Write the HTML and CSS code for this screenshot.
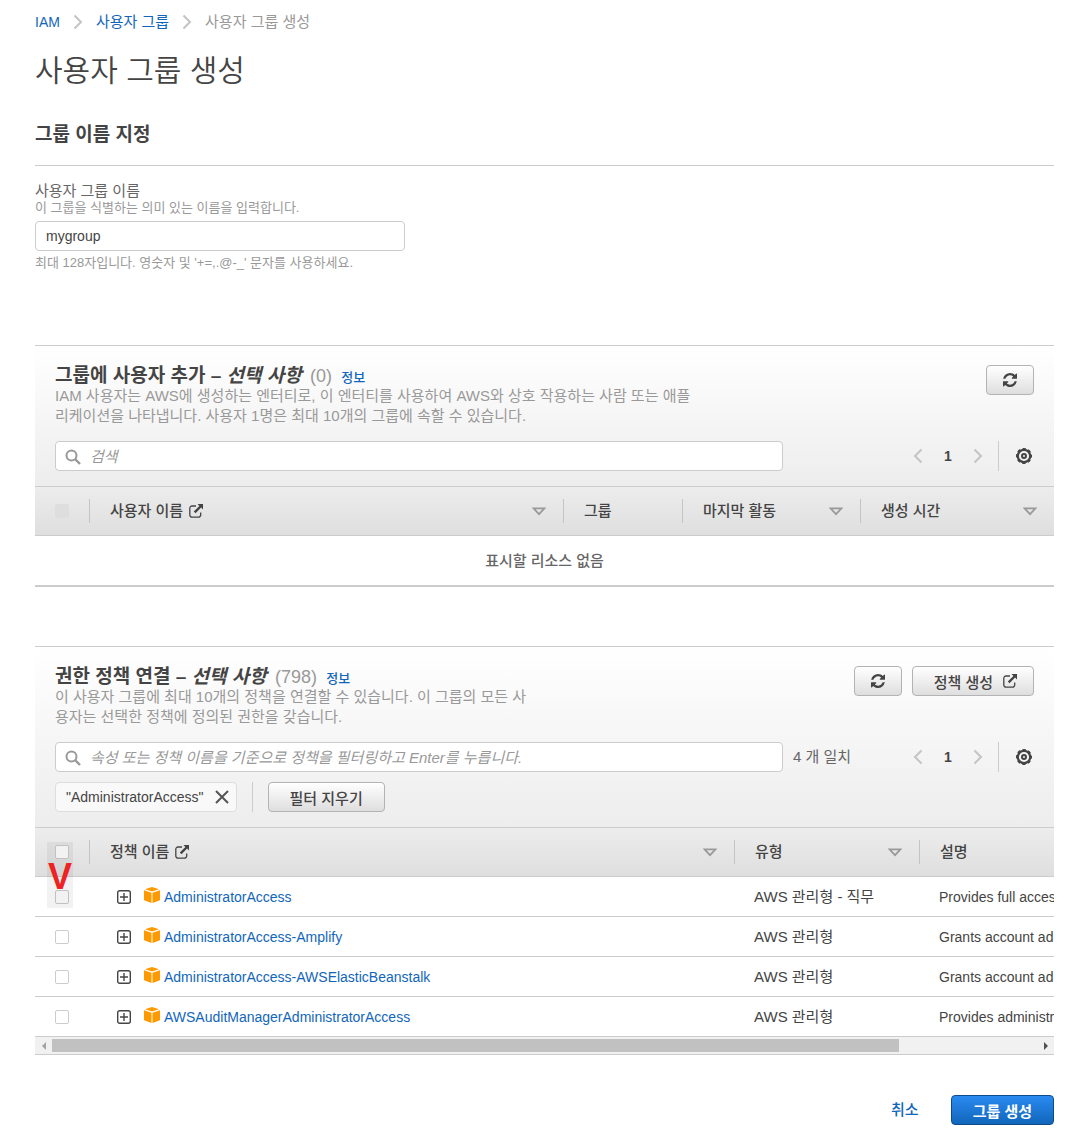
FILE: index.html
```html
<!DOCTYPE html>
<html lang="ko">
<head>
<meta charset="utf-8">
<title>사용자 그룹 생성</title>
<link rel="stylesheet" href="styles.css">
</head>
<body>
<svg class="defs" aria-hidden="true">
  <symbol id="chevron" viewBox="0 0 10 16"><path d="M1.500 1.500 8 8l-6.500 6.500" fill="none" stroke="currentColor" stroke-width="2"/></symbol>
  <symbol id="search" viewBox="0 0 16 16"><circle cx="6.500" cy="6.500" r="5" fill="none" stroke="currentColor" stroke-width="2"/><path d="m10 10 5 5" stroke="currentColor" stroke-width="2.400"/></symbol>
  <symbol id="refresh" viewBox="0 0 1536 1536"><path fill="currentColor" d="M1511 928q0 5-1 7-64 268-268 434.500T764 1536q-146 0-282.500-55T238 1324l-129 129q-19 19-45 19t-45-19-19-45V960q0-26 19-45t45-19h448q26 0 45 19t19 45-19 45l-137 137q71 66 161 102t187 36q134 0 250-65t186-179q11-17 53-117 8-23 30-23h192q13 0 22.500 9.500t9.500 22.500zm25-800v448q0 26-19 45t-45 19h-448q-26 0-45-19t-19-45 19-45l138-138Q969 256 768 256q-134 0-250 65T332 500q-11 17-53 117-8 23-30 23H50q-13 0-22.500-9.500T18 608v-7q65-268 270-434.500T768 0q146 0 284 55.500T1297 212l130-129q19-19 45-19t45 19 19 45z"/></symbol>
  <symbol id="external" viewBox="0 0 14 14"><path d="M7 2H3a2.200 2.200 0 0 0-2.200 2.200V11A2.200 2.200 0 0 0 3 13.200h6.500A2.200 2.200 0 0 0 11.700 11V8.500" fill="none" stroke="currentColor" stroke-width="1.300"/><path d="M8.500 0H14v5.500l-1.900-1.900L6.500 9.200 4.800 7.500l5.600-5.600z" fill="currentColor"/></symbol>
  <symbol id="sort" viewBox="0 0 14 9"><path d="M1.600 1.400h10.800L7 7.200z" fill="none" stroke="currentColor" stroke-width="1.700"/></symbol>
  <symbol id="gear" viewBox="0 0 18 18"><circle cx="9" cy="9" r="6.200" fill="none" stroke="currentColor" stroke-width="2.200"/><circle cx="9" cy="9" r="7.300" fill="none" stroke="currentColor" stroke-width="1.500" stroke-dasharray="3.330 2.404" stroke-dashoffset="1.660"/><circle cx="9" cy="9" r="2" fill="none" stroke="currentColor" stroke-width="2"/></symbol>
  <symbol id="close" viewBox="0 0 14 14"><path d="m1 1 12 12M13 1 1 13" stroke="currentColor" stroke-width="2"/></symbol>
  <symbol id="plus" viewBox="0 0 14 14"><rect x=".7" y=".7" width="12.600" height="12.600" rx="2" fill="none" stroke="currentColor" stroke-width="1.400"/><path d="M3 7h8M7 3v8" stroke="currentColor" stroke-width="1.400"/></symbol>
  <symbol id="cube" viewBox="0 0 16 16"><path fill="#f90" d="M8 0l7 2.300L8 4.600 1 2.300zM0 3.300l7.500 2.500V16L0 13.200zM16 3.300 8.500 5.800V16l7.500-2.800z"/></symbol>
</svg>

<main class="page">
  <nav class="crumbs" aria-label="경로">
    <a href="#">IAM</a>
    <svg class="i-chevron"><use href="#chevron"/></svg>
    <a href="#">사용자 그룹</a>
    <svg class="i-chevron"><use href="#chevron"/></svg>
    <span>사용자 그룹 생성</span>
  </nav>

  <h1>사용자 그룹 생성</h1>

  <section>
    <h2 class="section-title">그룹 이름 지정</h2>
    <div class="field">
      <label for="group-name">사용자 그룹 이름</label>
      <p class="hint">이 그룹을 식별하는 의미 있는 이름을 입력합니다.</p>
      <input class="textbox name-box" id="group-name" type="text" value="mygroup">
      <p class="constraint">최대 128자입니다. 영숫자 및 '+=,.@-_' 문자를 사용하세요.</p>
    </div>
  </section>

  <section class="panel">
    <div class="panel-head">
      <div class="title-row">
        <div>
          <h2>그룹에 사용자 추가 – <em>선택 사항</em> <span class="count">(0)</span> <a class="info" href="#">정보</a></h2>
          <p class="desc">IAM 사용자는 AWS에 생성하는 엔터티로, 이 엔터티를 사용하여 AWS와 상호 작용하는 사람 또는 애플<br>리케이션을 나타냅니다. 사용자 1명은 최대 10개의 그룹에 속할 수 있습니다.</p>
        </div>
        <div class="actions">
          <button class="btn icon-btn" type="button" aria-label="새로 고침"><svg class="i-refresh"><use href="#refresh"/></svg></button>
        </div>
      </div>
      <div class="toolbar">
        <label class="search"><svg class="i-search"><use href="#search"/></svg><input class="textbox" type="text" placeholder="검색" aria-label="검색"></label>
        <span class="matches"></span>
        <div class="pager">
          <button type="button" aria-label="이전"><svg class="i-chevron back"><use href="#chevron"/></svg></button>
          <span class="page-no">1</span>
          <button type="button" aria-label="다음"><svg class="i-chevron"><use href="#chevron"/></svg></button>
        </div>
        <button class="settings" type="button" aria-label="설정"><svg class="i-gear"><use href="#gear"/></svg></button>
      </div>
    </div>
    <table class="grid users">
      <colgroup><col class="c-check"><col><col class="c-group"><col class="c-activity"><col class="c-created"></colgroup>
      <thead>
        <tr>
          <th><div class="col pick"><input type="checkbox" disabled aria-label="모두 선택"></div></th>
          <th><div class="col">사용자 이름<svg class="i-ext"><use href="#external"/></svg><svg class="i-sort"><use href="#sort"/></svg></div></th>
          <th><div class="col">그룹</div></th>
          <th><div class="col">마지막 활동<svg class="i-sort"><use href="#sort"/></svg></div></th>
          <th><div class="col">생성 시간<svg class="i-sort"><use href="#sort"/></svg></div></th>
        </tr>
      </thead>
      <tbody><tr><td class="empty" colspan="5">표시할 리소스 없음</td></tr></tbody>
    </table>
  </section>

  <section class="panel">
    <div class="panel-head">
      <div class="title-row">
        <div>
          <h2>권한 정책 연결 – <em>선택 사항</em> <span class="count">(798)</span> <a class="info" href="#">정보</a></h2>
          <p class="desc">이 사용자 그룹에 최대 10개의 정책을 연결할 수 있습니다. 이 그룹의 모든 사<br>용자는 선택한 정책에 정의된 권한을 갖습니다.</p>
        </div>
        <div class="actions">
          <button class="btn icon-btn" type="button" aria-label="새로 고침"><svg class="i-refresh"><use href="#refresh"/></svg></button>
          <button class="btn link-out" type="button">정책 생성<svg class="i-ext"><use href="#external"/></svg></button>
        </div>
      </div>
      <div class="toolbar">
        <label class="search"><svg class="i-search"><use href="#search"/></svg><input class="textbox" type="text" placeholder="속성 또는 정책 이름을 기준으로 정책을 필터링하고 Enter를 누릅니다." aria-label="정책 필터"></label>
        <span class="matches">4 개 일치</span>
        <div class="pager">
          <button type="button" aria-label="이전"><svg class="i-chevron back"><use href="#chevron"/></svg></button>
          <span class="page-no">1</span>
          <button type="button" aria-label="다음"><svg class="i-chevron"><use href="#chevron"/></svg></button>
        </div>
        <button class="settings" type="button" aria-label="설정"><svg class="i-gear"><use href="#gear"/></svg></button>
      </div>
      <div class="filters">
        <span class="token">"AdministratorAccess"<button type="button" aria-label="필터 제거"><svg class="i-close"><use href="#close"/></svg></button></span>
        <span class="rule"></span>
        <button class="btn" type="button">필터 지우기</button>
      </div>
    </div>
    <div class="scroller">
      <table class="grid policies">
        <colgroup><col class="c-check"><col><col class="c-type"><col class="c-desc"></colgroup>
        <thead>
          <tr>
            <th><div class="col pick"><input type="checkbox" aria-label="모두 선택"></div></th>
            <th><div class="col">정책 이름<svg class="i-ext"><use href="#external"/></svg><svg class="i-sort"><use href="#sort"/></svg></div></th>
            <th><div class="col">유형<svg class="i-sort"><use href="#sort"/></svg></div></th>
            <th><div class="col">설명</div></th>
          </tr>
        </thead>
        <tbody>
          <tr>
            <td><div class="pick"><input type="checkbox" aria-label="AdministratorAccess"></div></td>
            <td><div class="policy"><button type="button" aria-label="펼치기"><svg class="i-plus"><use href="#plus"/></svg></button><svg class="i-cube"><use href="#cube"/></svg><a href="#">AdministratorAccess</a></div></td>
            <td class="type">AWS 관리형 - 직무</td>
            <td>Provides full access to AWS services</td>
          </tr>
          <tr>
            <td><div class="pick"><input type="checkbox" aria-label="AdministratorAccess-Amplify"></div></td>
            <td><div class="policy"><button type="button" aria-label="펼치기"><svg class="i-plus"><use href="#plus"/></svg></button><svg class="i-cube"><use href="#cube"/></svg><a href="#">AdministratorAccess-Amplify</a></div></td>
            <td class="type">AWS 관리형</td>
            <td>Grants account administrative permissions</td>
          </tr>
          <tr>
            <td><div class="pick"><input type="checkbox" aria-label="AdministratorAccess-AWSElasticBeanstalk"></div></td>
            <td><div class="policy"><button type="button" aria-label="펼치기"><svg class="i-plus"><use href="#plus"/></svg></button><svg class="i-cube"><use href="#cube"/></svg><a href="#">AdministratorAccess-AWSElasticBeanstalk</a></div></td>
            <td class="type">AWS 관리형</td>
            <td>Grants account administrative permissions</td>
          </tr>
          <tr>
            <td><div class="pick"><input type="checkbox" aria-label="AWSAuditManagerAdministratorAccess"></div></td>
            <td><div class="policy"><button type="button" aria-label="펼치기"><svg class="i-plus"><use href="#plus"/></svg></button><svg class="i-cube"><use href="#cube"/></svg><a href="#">AWSAuditManagerAdministratorAccess</a></div></td>
            <td class="type">AWS 관리형</td>
            <td>Provides administrative access</td>
          </tr>
        </tbody>
      </table>
      <div class="mark">V</div>
    </div>
    <div class="scrollbar">
      <span class="arrow left"></span>
      <div class="track"><div class="thumb"></div></div>
      <span class="arrow right"></span>
    </div>
  </section>

  <footer class="footer">
    <a href="#">취소</a>
    <button class="btn primary" type="button">그룹 생성</button>
  </footer>
</main>
</body>
</html>
```
FILE: styles.css
```css
* { box-sizing: border-box; }

body {
  margin: 0;
  background: #fff;
  color: #444;
  font: 14px/20px "Liberation Sans", "Noto Sans CJK KR", sans-serif;
}

h1, h2, p { margin: 0; }
a { color: #1166bb; text-decoration: none; }
svg { display: block; flex: none; }
button, input { font-family: inherit; color: inherit; margin: 0; }
button { display: flex; align-items: center; justify-content: center; padding: 0; border: 0; background: none; }
.defs { position: absolute; width: 0; height: 0; }

.page { padding: 12px 31px 19px 35px; }

/* Icons */
.i-chevron { width: 10px; height: 16px; color: #c4c4c4; }
.back { transform: scaleX(-1); }
.i-search { width: 16px; height: 16px; }
.i-refresh { width: 14px; height: 14px; }
.i-ext { width: 14px; height: 14px; }
.i-sort { width: 14px; height: 9px; color: #999; margin-left: auto; }
.i-gear { width: 18px; height: 18px; }
.i-close { width: 14px; height: 14px; color: #555; }
.i-plus { width: 14px; height: 14px; }
.i-cube { width: 16px; height: 16px; }

/* Heading area */
.crumbs { display: flex; align-items: center; gap: 13px; color: #999; font-size: 15px; }
.crumbs a:first-child { font-size: 14px; }
h1 { margin-top: 19px; font-size: 30px; line-height: 40px; font-weight: 350; }
.section-title {
  margin-top: 32px;
  padding-bottom: 18px;
  border-bottom: 1px solid #ccc;
  font-size: 19px;
  line-height: 24px;
}

.field { margin-top: 17px; color: #999; font-size: 13px; }
.field label { display: block; color: #666; font-size: 15px; line-height: 16px; }
.hint { line-height: 18px; }
.constraint { margin-top: 4px; line-height: 16px; }
.textbox {
  display: block;
  width: 100%;
  height: 30px;
  padding: 0 10px;
  border: 1px solid #ccc;
  border-radius: 4px;
  background: #fff;
  color: #444;
  font-size: 14px;
}
.name-box { max-width: 370px; margin-top: 4px; }

/* Panels */
.panel { margin-top: 59px; border-top: 1px solid #ccc; }
section:not(.panel) + .panel { margin-top: 74px; }
.panel-head { padding: 19px 20px 15px; background: linear-gradient(#fff, #ededed); }
.title-row { display: flex; justify-content: space-between; }
.panel h2 { font-size: 19px; line-height: 21px; }
.count { margin-left: 3px; font-size: 18px; line-height: 1; font-weight: normal; color: #999; }
.info { margin-left: 4px; font-size: 13px; line-height: 1; font-weight: 500; }
.desc { color: #999; font-size: 15px; }
.actions { display: flex; align-items: flex-start; gap: 10px; }

.btn {
  height: 30px;
  padding: 0 21px;
  gap: 10px;
  border: 1px solid #b3b3b3;
  border-radius: 4px;
  background: linear-gradient(#fff, #dedede);
  font-size: 15px;
  font-weight: 500;
}
.icon-btn, .link-out { padding-right: 16px; }
.icon-btn { padding-left: 16px; }

.toolbar { display: flex; align-items: center; margin-top: 15px; }
.search { position: relative; flex: 1; color: #999; }
.search .i-search { position: absolute; left: 10px; top: 8px; }
.search .textbox { padding-left: 34px; font-size: 15px; }
.search .textbox::placeholder { color: #999; font-style: italic; opacity: 1; }
.matches { width: 120px; padding-left: 10px; color: #666; font-size: 15px; }
.pager { display: flex; align-items: center; height: 30px; padding-right: 5px; border-right: 1px solid #ccc; }
.pager button, .page-no { width: 30px; height: 30px; line-height: 30px; text-align: center; font-weight: bold; }
.settings { width: 20px; margin-left: 15px; }

.filters { display: flex; align-items: center; margin-top: 10px; }
.token {
  display: flex;
  align-items: center;
  gap: 11px;
  height: 30px;
  padding: 0 7px 0 10px;
  border: 1px solid #ddd;
  border-radius: 4px;
  background: #f9f9f9;
}
.rule { width: 1px; height: 30px; margin: 0 15px; background: #ccc; }

/* Tables */
.grid { width: 100%; border-collapse: separate; border-spacing: 0; table-layout: fixed; }
.grid thead { background: linear-gradient(#ededed, #dedede); }
.grid th { height: 50px; padding: 0; border: 1px solid #ccc; border-width: 1px 0; font-size: 15px; font-weight: 500; text-align: left; }
.col { display: flex; align-items: center; height: 24px; padding: 0 17px 0 20px; border-right: 1px solid #c4c4c4; }
.col .i-ext { margin-left: 6px; }
th:last-child .col { border-right: 0; }
.grid .pick { padding: 0 0 0 20px; }
.c-check { width: 55px; }
.c-group { width: 119px; }
.c-activity { width: 178px; }
.c-created { width: 193px; }
.c-type { width: 185px; }
.c-desc { width: 297px; }
.users .empty { height: 51px; border-bottom: 2px solid #ccc; color: #666; font-size: 15px; font-weight: 500; text-align: center; }

.grid input {
  appearance: none;
  display: block;
  width: 14px;
  height: 14px;
  border: 1px solid #ccc;
  border-radius: 2px;
  background: #fff;
}
.grid input:disabled { border-color: #dedede; background: #dedede; }

.scroller { position: relative; overflow: hidden; }
.policies { width: 116%; }
.policies td { height: 40px; padding: 0 0 0 19px; border-bottom: 1px solid #ccc; white-space: nowrap; }
.policies td:nth-child(-n+2) { padding-left: 0; }
.policies .type { font-size: 15px; }
.policy { display: flex; align-items: center; padding-left: 27px; }
.policy .i-cube { margin: 0 4px 4px 13px; }

/* Red tick drawn over the first two checkboxes */
.mark {
  position: absolute;
  left: 12px;
  top: 15px;
  width: 26px;
  height: 66px;
  background: rgba(0, 0, 0, .05);
  color: #ee2222;
  font: bold 36px/70px "Liberation Sans", sans-serif;
  text-align: center;
  pointer-events: none;
}

.scrollbar { display: flex; align-items: center; height: 18px; border-bottom: 1px solid #ccc; background: #f1f1f1; }
.track { flex: 1; }
.thumb { width: 86%; height: 13px; background: #c1c1c1; }
.arrow { width: 17px; }
.arrow::before { content: ""; display: block; width: 0; margin: 0 auto; border: 4px solid transparent; }
.left::before { border-left-width: 0; border-right-color: #a3a3a3; }
.right::before { border-right-width: 0; border-left-color: #505050; }

.footer { display: flex; justify-content: flex-end; align-items: center; gap: 32px; margin-top: 40px; font-size: 15px; font-weight: 500; }
.primary { border-color: #0f4a8a; background: linear-gradient(#2a8af0, #1166bb); color: #fff; font-weight: bold; }
```
